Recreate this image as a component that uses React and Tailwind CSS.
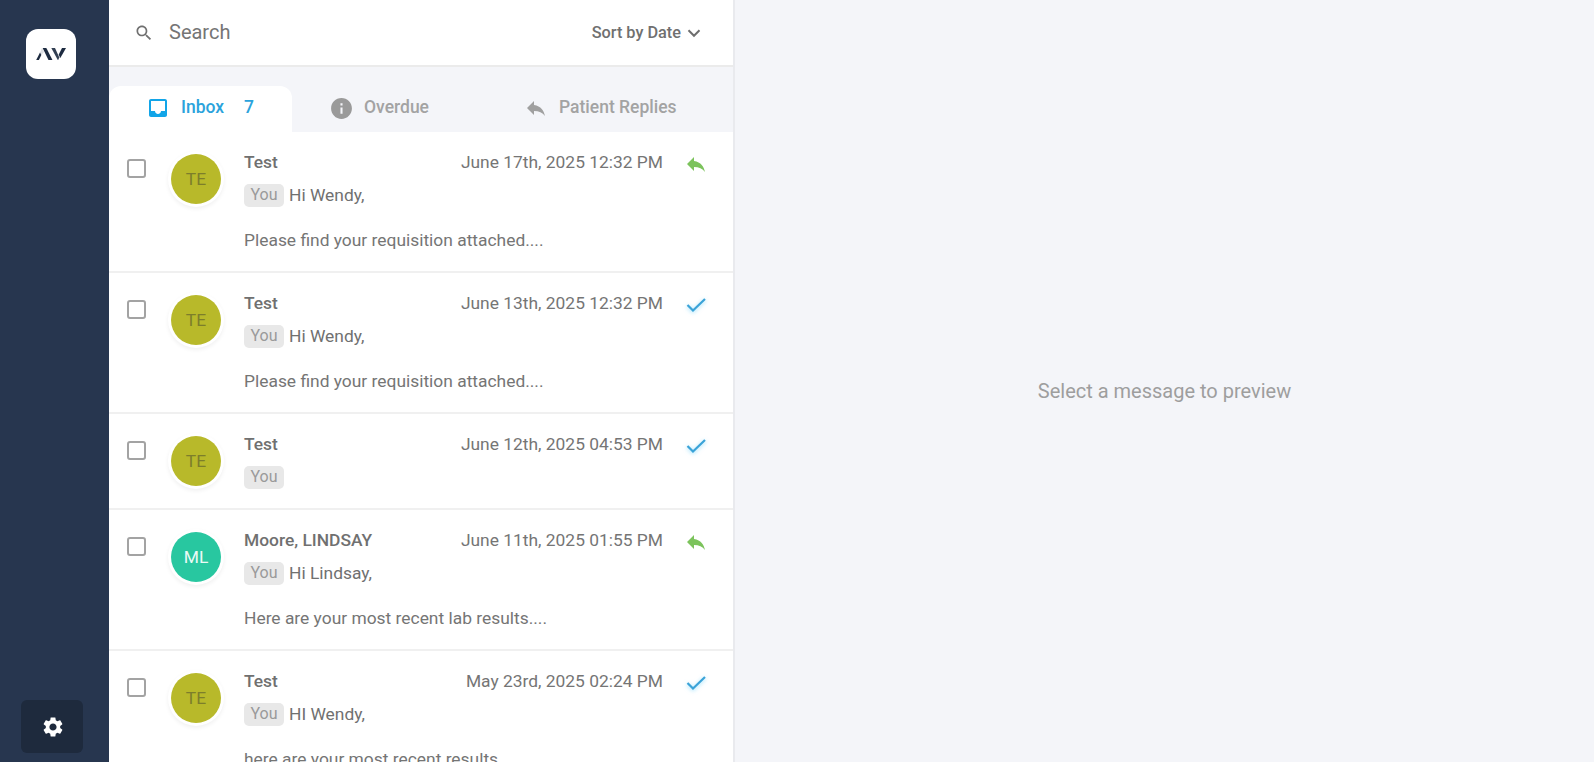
const P = {
  search: "M15.5 14h-.79l-.28-.27C15.41 12.59 16 11.11 16 9.5 16 5.91 13.09 3 9.5 3S3 5.91 3 9.5 5.91 16 9.5 16c1.61 0 3.09-.59 4.23-1.57l.27.28v.79l5 4.99L20.49 19l-4.99-5zm-6 0C7.01 14 5 11.99 5 9.5S7.01 5 9.5 5 14 7.01 14 9.5 11.99 14 9.5 14z",
  inbox: "M19 3H4.99c-1.11 0-1.98.89-1.98 2L3 19c0 1.1.88 2 1.99 2H19c1.1 0 2-.9 2-2V5c0-1.11-.9-2-2-2zm0 12h-4c0 1.66-1.35 3-3 3s-3-1.34-3-3H4.99V5H19v10z",
  info: "M12 2C6.48 2 2 6.48 2 12s4.48 10 10 10 10-4.48 10-10S17.52 2 12 2zm1 15h-2v-6h2v6zm0-8h-2V7h2v2z",
  reply: "M10 9V5l-7 7 7 7v-4.1c5 0 8.5 1.6 11 5.1-1-5-4-10-11-11z",
  settings: "M19.14 12.94c.04-.3.06-.61.06-.94 0-.32-.02-.64-.07-.94l2.03-1.58c.18-.14.23-.41.12-.61l-1.92-3.32c-.12-.22-.37-.29-.59-.22l-2.39.96c-.5-.38-1.03-.7-1.62-.94l-.36-2.54c-.04-.24-.24-.41-.48-.41h-3.84c-.24 0-.43.17-.47.41l-.36 2.54c-.59.24-1.13.57-1.62.94l-2.39-.96c-.22-.08-.47 0-.59.22L2.74 8.87c-.12.21-.08.47.12.61l2.03 1.58c-.05.3-.09.63-.09.94s.02.64.07.94l-2.03 1.58c-.18.14-.23.41-.12.61l1.92 3.32c.12.22.37.29.59.22l2.39-.96c.5.38 1.03.7 1.62.94l.36 2.54c.05.24.24.41.48.41h3.84c.24 0 .44-.17.47-.41l.36-2.54c.59-.24 1.13-.56 1.62-.94l2.39.96c.22.08.47 0 .59-.22l1.92-3.32c.12-.22.07-.47-.12-.61l-2.01-1.58zM12 15.6c-1.98 0-3.6-1.62-3.6-3.6s1.62-3.6 3.6-3.6 3.6 1.62 3.6 3.6-1.62 3.6-3.6 3.6z",
};

function Icon({ d, className }) {
  return (
    <svg viewBox="0 0 24 24" fill="currentColor" className={className}>
      <path d={d} />
    </svg>
  );
}

const rows = [
  { name: "Test", date: "June 17th, 2025 12:32 PM", status: "reply", l1: "Hi Wendy,", l2: "Please find your requisition attached...." },
  { name: "Test", date: "June 13th, 2025 12:32 PM", status: "check", l1: "Hi Wendy,", l2: "Please find your requisition attached...." },
  { name: "Test", date: "June 12th, 2025 04:53 PM", status: "check", l1: "", l2: "" },
  { name: "Moore, LINDSAY", date: "June 11th, 2025 01:55 PM", status: "reply", l1: "Hi Lindsay,", l2: "Here are your most recent lab results....", ml: true },
  { name: "Test", date: "May 23rd, 2025 02:24 PM", status: "check", l1: "HI Wendy,", l2: "here are your most recent results" },
];

function Row({ r }) {
  return (
    <div className={`flex shrink-0 border-b-2 border-[#f0f0f0] ${r.l2 ? "h-[141px]" : "h-[96px]"}`}>
      <div className="pt-[27px] pl-[18px] w-[135px] shrink-0 flex">
        <div className="w-[19px] h-[19px] rounded-[3px] border-2 border-[#a3a3a3] shrink-0" />
        <div
          className={`ml-[25px] mt-[-5px] w-[50px] h-[50px] rounded-full flex items-center justify-center text-[17.4px] shadow-[0_2px_4px_3px_rgba(0,0,0,0.06)] ring-[3px] ring-white ${
            r.ml ? "bg-[#28c7a0] text-[#eafaf5]" : "bg-[#b8b92a] text-[#7d7e2b]"
          }`}
        >
          {r.ml ? "ML" : "TE"}
        </div>
      </div>
      <div className="flex-1 min-w-0 pt-[19px]">
        <div className="flex items-center h-[22px]">
          <div className="text-[17.4px] font-medium text-[#707070] flex-1">{r.name}</div>
          <div className="text-[17.4px] text-[#757575] w-[230px] text-right whitespace-nowrap">{r.date}</div>
          <div className="w-[70px] pl-[21px] flex items-center">
            {r.status === "reply" ? (
              <Icon d={P.reply} className="w-[24px] h-[24px] text-[#7cc35c] mt-[4px]" />
            ) : (
              <svg viewBox="0 0 24 24" className="w-[24px] h-[24px] mt-[2px] text-[#3ba3d8] drop-shadow-[0_1px_2px_rgba(80,200,250,0.6)]" fill="none" stroke="currentColor" strokeWidth="2.2">
                <path d="M3.5 13l5.5 5.5L21 7" />
              </svg>
            )}
          </div>
        </div>
        <div className="flex items-center mt-[10px] h-[24px]">
          <span className="w-[40px] h-[23px] rounded-[5px] bg-[#e8e8e8] text-[#9a9a9a] text-[16px] flex items-center justify-center">You</span>
          {r.l1 && <span className="ml-[5px] text-[17.4px] text-[#707070]">{r.l1}</span>}
        </div>
        {r.l2 && <div className="mt-[21px] text-[17.4px] leading-[24px] text-[#757575]">{r.l2}</div>}
      </div>
    </div>
  );
}

export default function App() {
  return (
    <div className="flex h-screen overflow-hidden bg-[#f4f5f9]" style={{ fontFamily: "Roboto, sans-serif" }}>
      <aside className="w-[109px] shrink-0 bg-[#27364f] flex flex-col justify-between pt-[29px] pb-[9px]">
        <div className="ml-[26px] w-[50px] h-[50px] rounded-[12px] bg-white flex items-center justify-center">
          <svg viewBox="0 0 90 37" className="w-[30px] h-[12.5px]" fill="#1d2b40">
            <polygon points="0,37 8,37 16,21 12,13" />
            <polygon points="12,13 18,0 24,12 16,21" opacity="0.15" />
            <polygon points="20,0 31,0 50,37 38,37" />
            <polygon points="46,0 57,0 70,28 66,37" opacity="0.9" />
            <polygon points="78,0 90,0 73,30 68,20" />
          </svg>
        </div>
        <div className="ml-[21px] w-[62px] h-[53px] rounded-[6px] bg-[#1e2a3d] flex items-center justify-center">
          <Icon d={P.settings} className="w-[24px] h-[24px] ml-[2px] text-white" />
        </div>
      </aside>

      <section className="w-[626px] shrink-0 flex flex-col border-r-2 border-[#e9eaee]">
        <header className="h-[67px] shrink-0 bg-white border-b-2 border-[#ebebeb] flex items-center pl-[25px] pr-[28px]">
          <Icon d={P.search} className="w-[20px] h-[20px] text-[#707070]" />
          <span className="ml-[15px] mb-[2px] text-[20px] text-[#757575] flex-1">Search</span>
          <span className="mt-[2px] text-[16.3px] font-medium text-[#707070]">Sort by Date</span>
          <svg viewBox="0 0 24 24" className="ml-[2px] w-[22px] h-[22px] text-[#6e6e6e]" fill="none" stroke="currentColor" strokeWidth="2.2">
            <path d="M6 9l6 6 6-6" />
          </svg>
        </header>

        <nav className="h-[65px] shrink-0 pt-[19px] flex items-stretch text-[17.5px] font-medium text-[#a3a3a3]">
          <div className="w-[183px] bg-white rounded-t-[12px] flex items-center pl-[37px] pb-[4px] text-[#2ba3dc]">
            <Icon d={P.inbox} className="w-[24px] h-[24px] mt-[2px] text-[#12a5e8]" />
            <span className="ml-[11px]">Inbox</span>
            <span className="ml-[20px]">7</span>
          </div>
          <div className="flex items-center ml-[37px] pb-[4px]">
            <Icon d={P.info} className="w-[25px] h-[25px] mt-[2px] text-[#9a9a9a]" />
            <span className="ml-[10px]">Overdue</span>
          </div>
          <div className="flex items-center ml-[95px] pb-[4px]">
            <Icon d={P.reply} className="w-[24px] h-[24px] mt-[2px] text-[#a0a0a0]" />
            <span className="ml-[11px]">Patient Replies</span>
          </div>
        </nav>

        <div className="flex-1 min-h-0 overflow-hidden bg-white">
          {rows.map((r, i) => (
            <Row key={i} r={r} />
          ))}
        </div>
      </section>

      <main className="flex-1 flex items-center justify-center pt-[20px]">
        <span className="text-[20px] text-[#9e9e9e]">Select a message to preview</span>
      </main>
    </div>
  );
}
